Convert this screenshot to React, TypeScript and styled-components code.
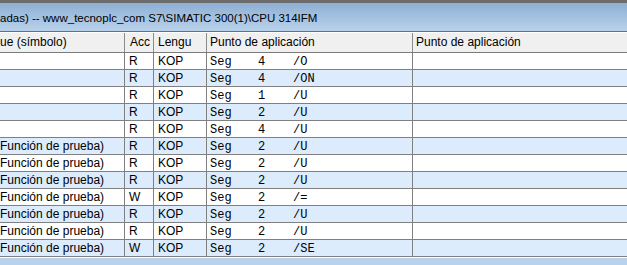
import React from 'react';
import styled, { createGlobalStyle } from 'styled-components';

const GlobalStyle = createGlobalStyle`
  html, body {
    margin: 0;
    padding: 0;
    background: #ffffff;
  }
  * {
    box-sizing: border-box;
  }
`;

const Window = styled.div`
  width: 627px;
  height: 265px;
  display: flex;
  flex-direction: column;
  overflow: hidden;
  font-family: 'Liberation Sans', Arial, sans-serif;
  font-size: 12px;
  color: #000;
  background: #fff;
`;

const TitleBar = styled.div`
  height: 32px;
  flex: none;
  display: flex;
  align-items: center;
  border-top: 3px solid #6c6c6c;
  border-bottom: 1px solid #6f6f6f;
  background: linear-gradient(to bottom, #8eafd3, #b9d2eb);
  white-space: nowrap;
  font-size: 11.5px;
  padding-top: 1px;
`;

const cols = '125px 29px 53px 206px 1fr';

const HeaderRow = styled.div`
  height: 21px;
  flex: none;
  display: grid;
  grid-template-columns: ${cols};
  border-top: 1px solid #ffffff;
  border-bottom: 1px solid #7b7b7b;
  background: #f0f0f0;
`;

const HeaderCell = styled.div<{ $pad: number }>`
  display: flex;
  align-items: center;
  padding-left: ${({ $pad }) => $pad}px;
  padding-bottom: 1px;
  border-right: 1px solid #8c8c8c;
  white-space: nowrap;
  overflow: hidden;
  &:last-child {
    border-right: none;
  }
`;

const Body = styled.div`
  flex: none;
  display: flex;
  flex-direction: column;
`;

const Row = styled.div<{ $alt: boolean }>`
  height: 17px;
  display: grid;
  grid-template-columns: ${cols};
  border-bottom: 1px solid #808080;
  background: ${({ $alt }) => ($alt ? '#dcecfd' : '#ffffff')};
`;

const Cell = styled.div<{ $pad: number }>`
  display: flex;
  align-items: center;
  padding-left: ${({ $pad }) => $pad}px;
  border-right: 1px solid #808080;
  white-space: nowrap;
  overflow: hidden;
  &:last-child {
    border-right: none;
  }
`;

const MonoCell = styled(Cell)`
  font-family: 'Liberation Mono', 'Courier New', monospace;
  font-size: 12px;
  padding-top: 1px;
`;

const MonoPart = styled.span<{ $w: number }>`
  display: inline-block;
  width: ${({ $w }) => $w}px;
`;

const Gap = styled.div`
  height: 1px;
  flex: none;
  background: #ffffff;
`;

const Footer = styled.div`
  flex: 1;
  background: #b9d1ea;
`;

type Entry = { name: string; acc: string; nw: string; op: string };

const rows: Entry[] = [
  { name: '', acc: 'R', nw: '4', op: '/O' },
  { name: '', acc: 'R', nw: '4', op: '/ON' },
  { name: '', acc: 'R', nw: '1', op: '/U' },
  { name: '', acc: 'R', nw: '2', op: '/U' },
  { name: '', acc: 'R', nw: '4', op: '/U' },
  { name: 'Función de prueba)', acc: 'R', nw: '2', op: '/U' },
  { name: 'Función de prueba)', acc: 'R', nw: '2', op: '/U' },
  { name: 'Función de prueba)', acc: 'R', nw: '2', op: '/U' },
  { name: 'Función de prueba)', acc: 'W', nw: '2', op: '/=' },
  { name: 'Función de prueba)', acc: 'R', nw: '2', op: '/U' },
  { name: 'Función de prueba)', acc: 'R', nw: '2', op: '/U' },
  { name: 'Función de prueba)', acc: 'W', nw: '2', op: '/SE' },
];

export default function App() {
  return (
    <>
      <GlobalStyle />
      <Window>
        <TitleBar>adas) -- www_tecnoplc_com S7\SIMATIC 300(1)\CPU 314IFM</TitleBar>
        <HeaderRow>
          <HeaderCell $pad={0}>ue (símbolo)</HeaderCell>
          <HeaderCell $pad={5}>Acc</HeaderCell>
          <HeaderCell $pad={4}>Lengu</HeaderCell>
          <HeaderCell $pad={3}>Punto de aplicación</HeaderCell>
          <HeaderCell $pad={3}>Punto de aplicación</HeaderCell>
        </HeaderRow>
        <Body>
          {rows.map((r, i) => (
            <Row key={i} $alt={i % 2 === 1}>
              <Cell $pad={0}>{r.name}</Cell>
              <Cell $pad={4}>{r.acc}</Cell>
              <Cell $pad={4}>KOP</Cell>
              <MonoCell $pad={3}>
                <MonoPart $w={48}>Seg</MonoPart>
                <MonoPart $w={35}>{r.nw}</MonoPart>
                <span>{r.op}</span>
              </MonoCell>
              <Cell $pad={3} />
            </Row>
          ))}
        </Body>
        <Gap />
        <Footer />
      </Window>
    </>
  );
}
